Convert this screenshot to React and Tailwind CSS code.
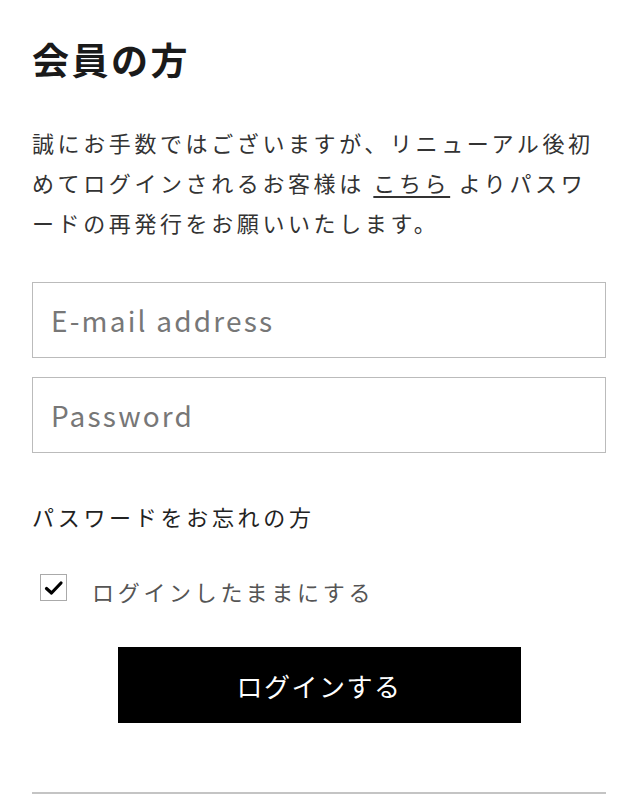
import React from "react";

export default function App() {
  const font = { fontFamily: '"Noto Sans CJK JP", "Noto Sans", sans-serif' };
  return (
    <div className="min-h-[807px] w-[638px] bg-white px-[32px] pt-[32px] text-[#222]" style={font}>
      <h1 className="text-[37px] font-bold leading-[54px] tracking-[2.5px] text-[#1a1a1a]">会員の方</h1>
      <p className="mt-[36px] text-[22px] leading-[40px] tracking-[3.6px] text-[#333]">
        誠にお手数ではございますが、リニューアル後初
        <br />
        めてログインされるお客様は <span className="underline underline-offset-[4px] decoration-[1.5px]">こちら</span> よりパスワ
        <br />
        ードの再発行をお願いいたします。
      </p>
      <div className="mt-[40px] flex flex-col gap-[19px]">
        <input
          type="text"
          placeholder="E-mail address"
          className="h-[76px] w-full border border-[#bbb] px-[18px] text-[28px] tracking-[2.2px] text-[#333] placeholder:text-[#777] outline-none"
          style={font}
        />
        <input
          type="password"
          placeholder="Password"
          className="h-[76px] w-full border border-[#bbb] px-[18px] text-[28px] tracking-[2.2px] text-[#333] placeholder:text-[#777] outline-none"
          style={font}
        />
      </div>
      <div className="mt-[43px] text-[22px] leading-[40px] tracking-[3.7px] text-[#222]">パスワードをお忘れの方</div>
      <div className="mt-[38px] flex items-start pl-[8px]">
        <div className="flex h-[27px] w-[27px] shrink-0 items-center justify-center border border-[#aaa] bg-white">
          <svg width="20" height="16" viewBox="0 0 20 16">
            <path d="M2.5 8.5 L7.5 13 L17 3" fill="none" stroke="#000" strokeWidth="3.2" strokeLinecap="round" strokeLinejoin="round" />
          </svg>
        </div>
        <span className="ml-[25px] mt-[1px] text-[22px] leading-[32px] tracking-[3.7px] text-[#555]">ログインしたままにする</span>
      </div>
      <div className="mt-[40px] flex justify-center">
        <button className="h-[76px] w-[403px] bg-black text-[26px] tracking-[1.5px] text-white" style={font}>
          ログインする
        </button>
      </div>
      <div className="mt-[69px] h-[2px] w-full bg-[#c4c4c4]" />
    </div>
  );
}
